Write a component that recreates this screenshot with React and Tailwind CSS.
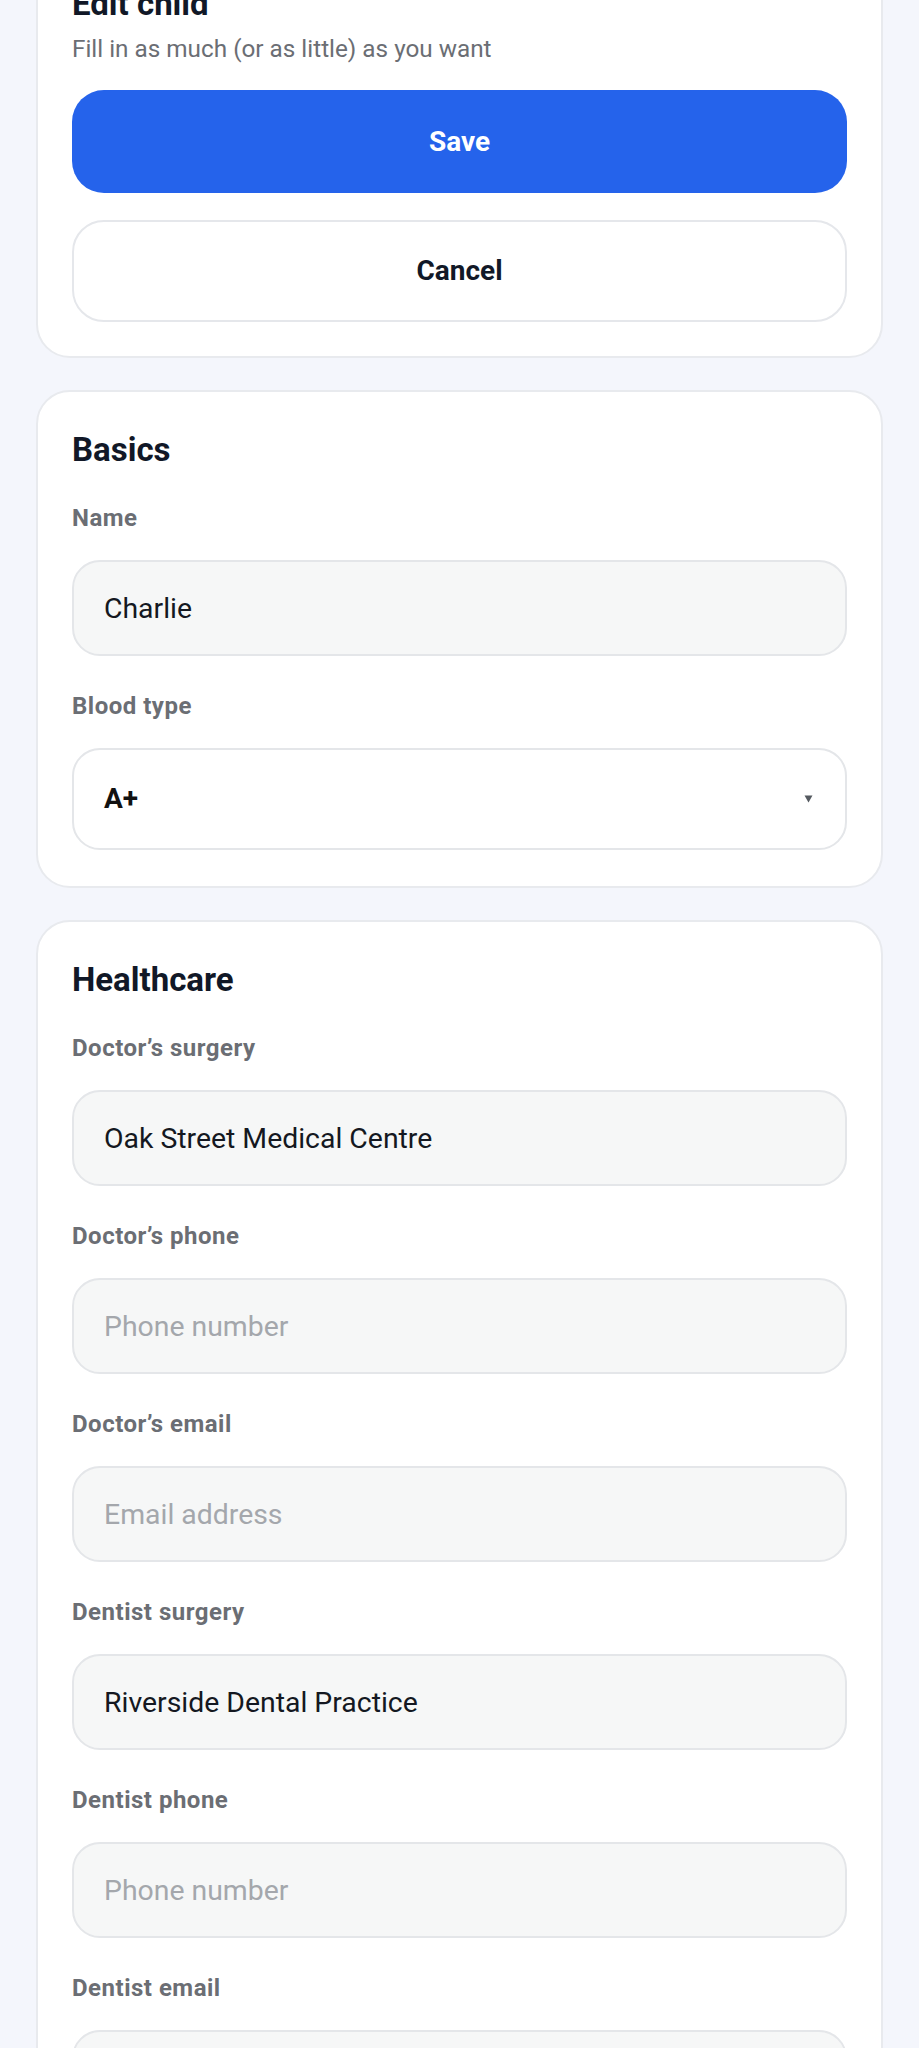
import React from "react";

function Label({ children }) {
  return (
    <div className="text-[24px] leading-[32px] font-bold tracking-[0.5px] text-[#6b6e74] mb-[26px]">
      {children}
    </div>
  );
}

function TextField({ label, value, placeholder }) {
  return (
    <div className="flex flex-col">
      <Label>{label}</Label>
      <input
        readOnly
        defaultValue={value}
        placeholder={placeholder}
        className="h-[96px] w-full rounded-[28px] border-2 border-[#e4e6e9] bg-[#f6f7f7] px-[30px] text-[28.4px] text-[#141821] outline-none placeholder:text-[#a4a7ac] font-['Roboto',sans-serif]"
      />
    </div>
  );
}

function Card({ children, pb = "pb-[36px]" }) {
  return (
    <section className={`rounded-[34px] border-2 border-[#e8eaee] bg-white px-[34px] pt-[34px] ${pb}`}>
      {children}
    </section>
  );
}

function CardTitle({ children }) {
  return (
    <h2 className="text-[33px] leading-[48px] font-bold text-[#111827] mb-[28px]">
      {children}
    </h2>
  );
}

export default function App() {
  return (
    <div className="min-h-screen bg-[#f4f6fc] px-[36px] flex flex-col font-['Roboto',sans-serif]">
      <div className="-mt-[56px] flex flex-col gap-[32px]">
        <section className="rounded-[34px] border-2 border-[#e8eaee] bg-white px-[34px] pt-[34px] pb-[34px]">
          <h1 className="text-[33px] leading-[48px] font-bold text-[#111827]">Edit child</h1>
          <p className="mt-[5px] text-[24.3px] leading-[32px] text-[#6b6e74]">
            Fill in as much (or as little) as you want
          </p>
          <button className="mt-[25px] h-[103px] w-full rounded-[32px] bg-[#2563eb] text-[28px] font-bold text-white">
            Save
          </button>
          <button className="mt-[27px] h-[102px] w-full rounded-[32px] border-2 border-[#e5e7eb] bg-white text-[28px] font-bold text-[#111827]">
            Cancel
          </button>
        </section>

        <Card>
          <CardTitle>Basics</CardTitle>
          <div className="flex flex-col gap-[34px]">
            <TextField label="Name" value="Charlie" />
            <div className="flex flex-col">
              <Label>Blood type</Label>
              <div className="flex h-[102px] w-full items-center justify-between rounded-[28px] border-2 border-[#e4e6e9] bg-white pl-[30px] pr-[32px]">
                <span className="text-[28px] font-bold text-[#111111]">A+</span>
                <svg width="9" height="8" viewBox="0 0 9 8" aria-hidden="true">
                  <path d="M0.5 0.5 L8.5 0.5 L4.5 7.5 Z" fill="#555a60" />
                </svg>
              </div>
            </div>
          </div>
        </Card>

        <Card>
          <CardTitle>Healthcare</CardTitle>
          <div className="flex flex-col gap-[34px]">
            <TextField label="Doctor’s surgery" value="Oak Street Medical Centre" />
            <TextField label="Doctor’s phone" placeholder="Phone number" />
            <TextField label="Doctor’s email" placeholder="Email address" />
            <TextField label="Dentist surgery" value="Riverside Dental Practice" />
            <TextField label="Dentist phone" placeholder="Phone number" />
            <TextField label="Dentist email" placeholder="Email address" />
          </div>
        </Card>
      </div>
    </div>
  );
}
